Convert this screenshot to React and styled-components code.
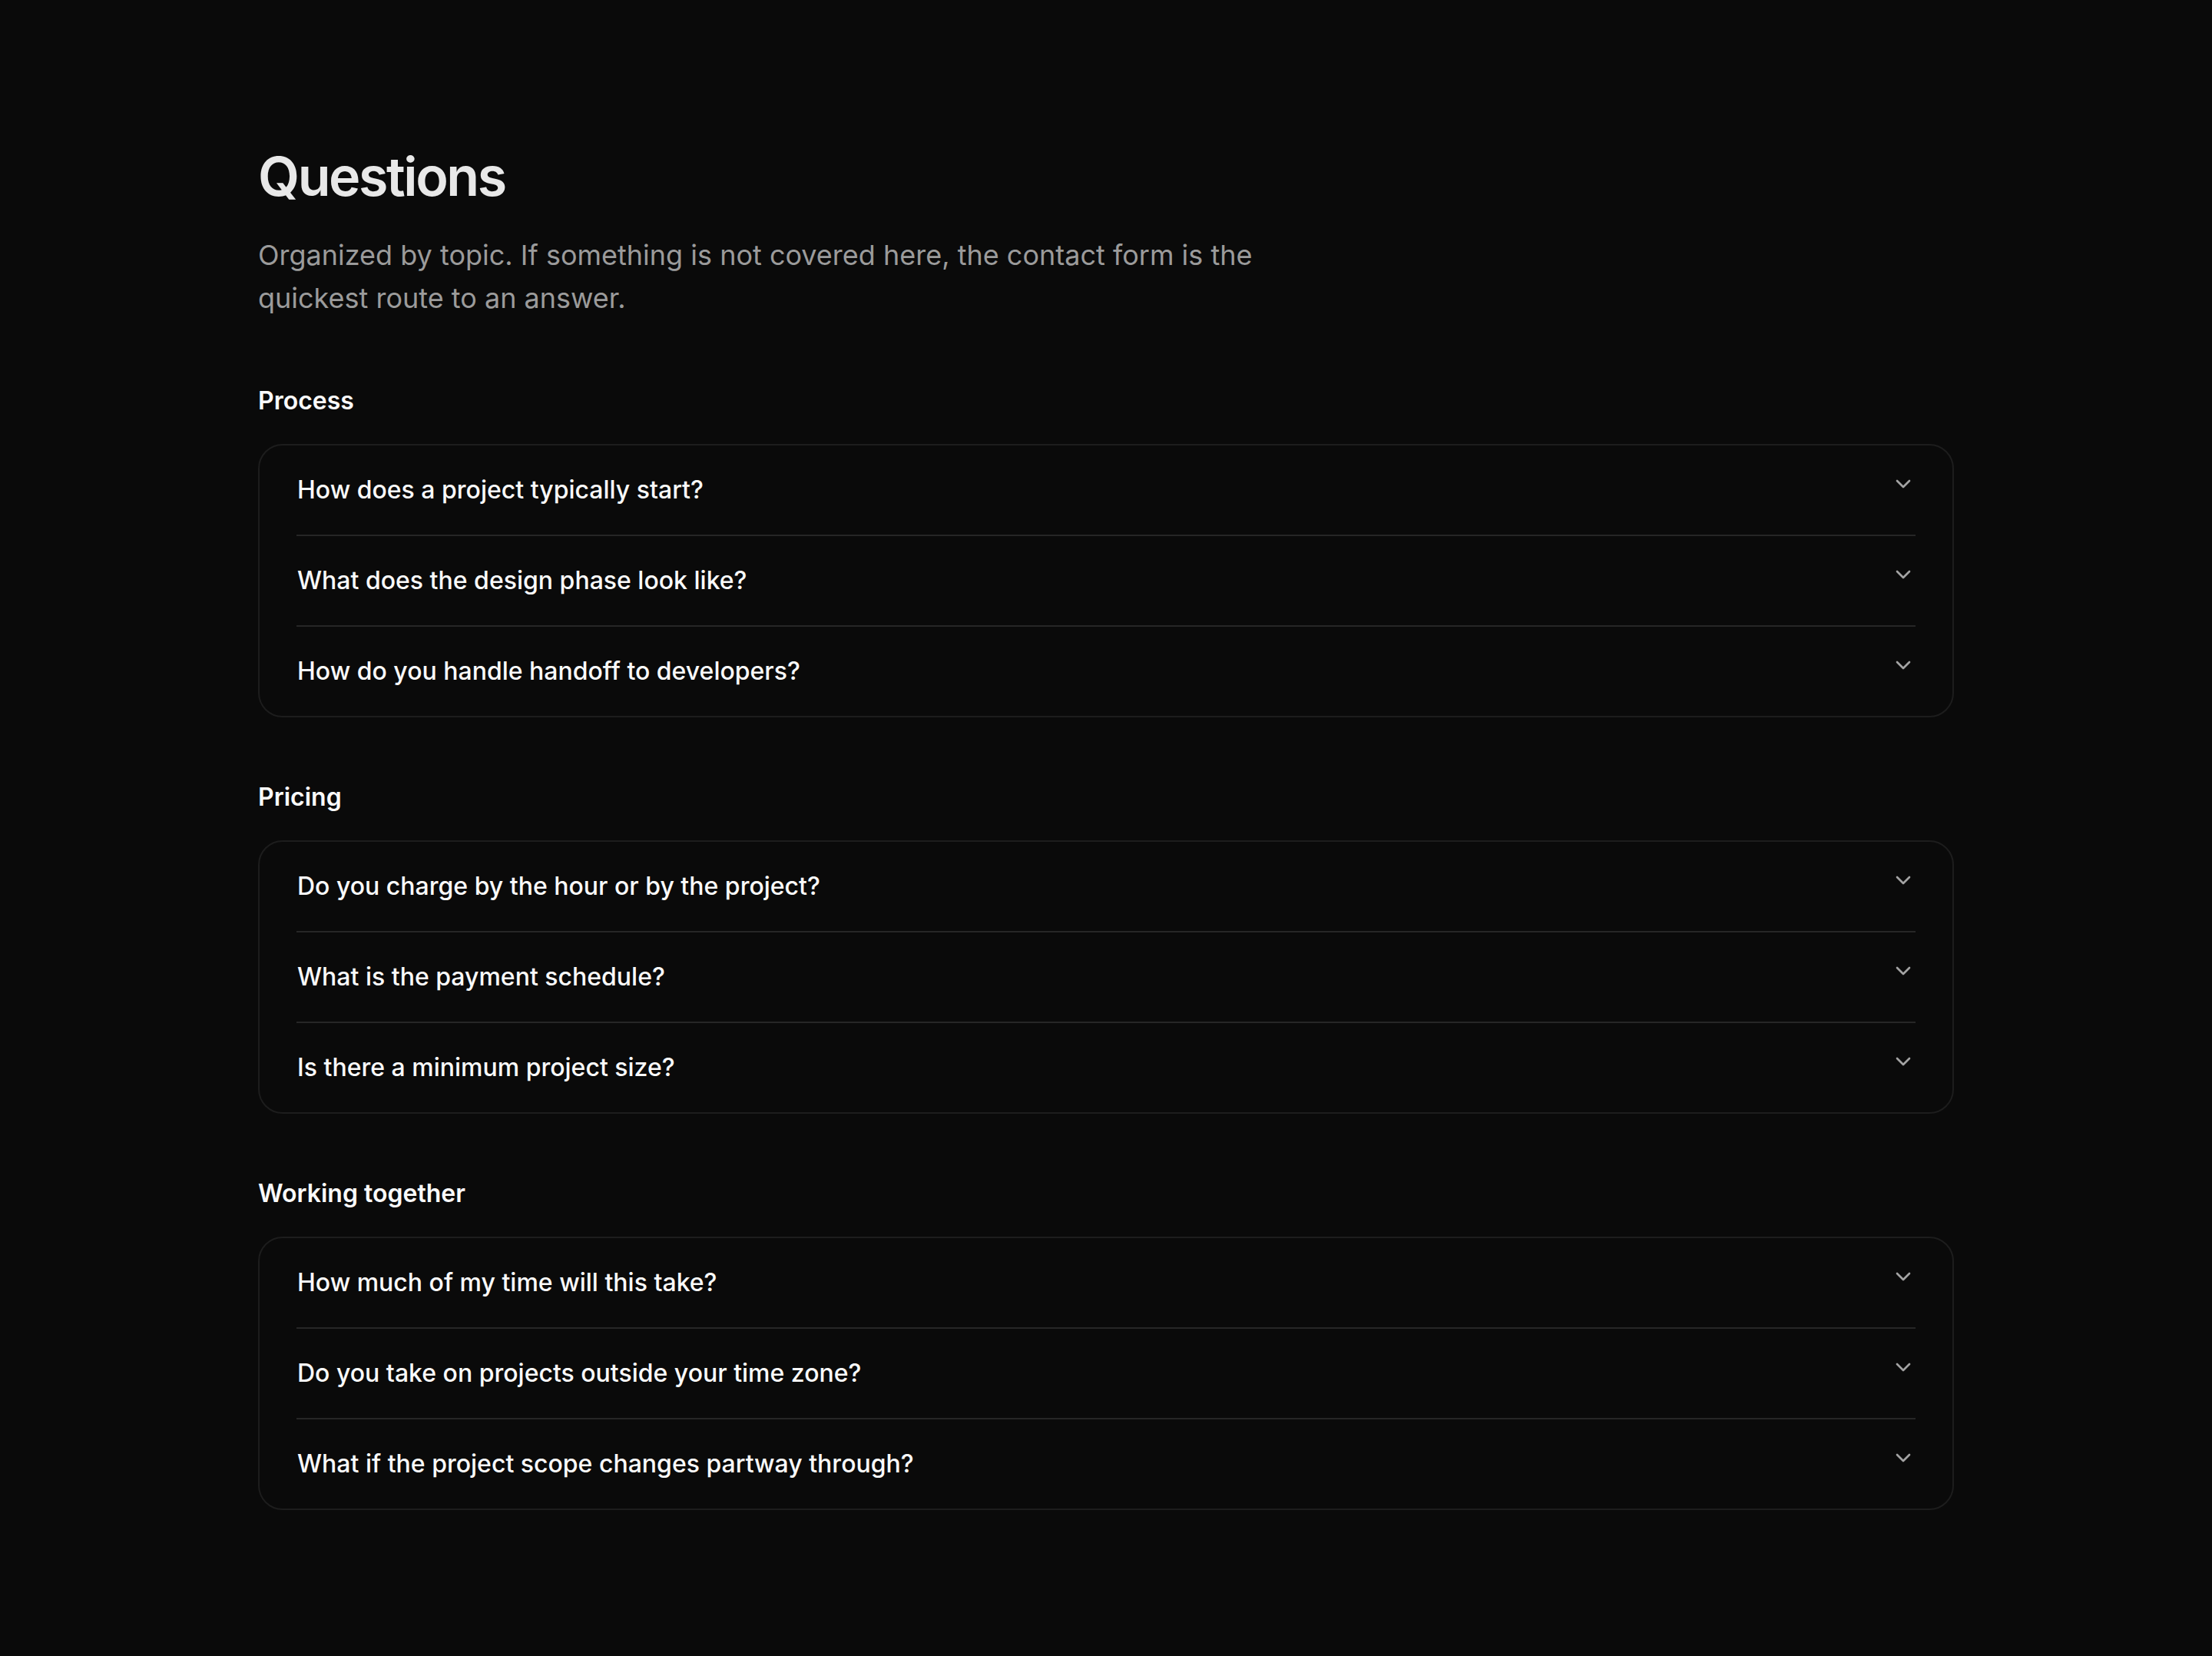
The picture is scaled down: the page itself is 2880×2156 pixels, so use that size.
import React from "react";
import styled, { createGlobalStyle } from "styled-components";
import { ChevronDown } from "lucide-react";

const GlobalStyle = createGlobalStyle`
  html, body {
    margin: 0;
    padding: 0;
    background: #0a0a0a;
  }
  body {
    font-family: Inter, "Noto Sans", "Liberation Sans", sans-serif;
    color: #fafafa;
    -webkit-font-smoothing: antialiased;
  }
  * { box-sizing: border-box; }
`;

const Page = styled.main`
  min-height: 100vh;
  background: #0a0a0a;
  padding: 187px 0 192px;
`;

const Container = styled.div`
  max-width: 2208px;
  margin: 0 auto;
  display: flex;
  flex-direction: column;
  gap: 80px;
`;

const Header = styled.header`
  display: flex;
  flex-direction: column;
  gap: 31px;
  margin-bottom: 2px;
`;

const Title = styled.h1`
  margin: 0;
  font-size: 70px;
  line-height: 86px;
  font-weight: 600;
  letter-spacing: -0.035em;
  color: #e8e8e8;
`;

const Subtitle = styled.p`
  margin: 0;
  max-width: 1344px;
  font-size: 36px;
  line-height: 56px;
  font-weight: 400;
  color: #9b9b9b;
`;

const Section = styled.section`
  display: flex;
  flex-direction: column;
  gap: 32px;
`;

const SectionLabel = styled.h2`
  margin: 0;
  font-size: 32px;
  line-height: 48px;
  font-weight: 600;
  color: #fafafa;
`;

const Card = styled.div`
  border: 2px solid #1d1d1d;
  border-radius: 32px;
  background: #0a0a0a;
`;

const Item = styled.div`
  margin: 0 48px;
  border-top: ${(p) => (p.$first ? "none" : "2px solid #262626")};
`;

const Trigger = styled.button`
  all: unset;
  box-sizing: border-box;
  width: 100%;
  display: flex;
  align-items: flex-start;
  justify-content: space-between;
  gap: 32px;
  padding: 34px 0;
  cursor: pointer;
`;

const Question = styled.span`
  font-family: Inter, "Noto Sans", "Liberation Sans", sans-serif;
  font-size: 32px;
  line-height: 48px;
  font-weight: 500;
  color: #fafafa;
  padding-left: 1px;
`;

const Icon = styled(ChevronDown)`
  flex-shrink: 0;
  color: #a3a3a3;
`;

const sections = [
  {
    label: "Process",
    items: [
      "How does a project typically start?",
      "What does the design phase look like?",
      "How do you handle handoff to developers?",
    ],
  },
  {
    label: "Pricing",
    items: [
      "Do you charge by the hour or by the project?",
      "What is the payment schedule?",
      "Is there a minimum project size?",
    ],
  },
  {
    label: "Working together",
    items: [
      "How much of my time will this take?",
      "Do you take on projects outside your time zone?",
      "What if the project scope changes partway through?",
    ],
  },
];

export default function App() {
  return (
    <>
      <GlobalStyle />
      <Page>
        <Container>
          <Header>
            <Title>Questions</Title>
            <Subtitle>
              Organized by topic. If something is not covered here, the contact
              form is the quickest route to an answer.
            </Subtitle>
          </Header>
          {sections.map((s) => (
            <Section key={s.label}>
              <SectionLabel>{s.label}</SectionLabel>
              <Card>
                {s.items.map((q, i) => (
                  <Item key={q} $first={i === 0}>
                    <Trigger type="button" aria-expanded="false">
                      <Question>{q}</Question>
                      <Icon size={32} strokeWidth={2} />
                    </Trigger>
                  </Item>
                ))}
              </Card>
            </Section>
          ))}
        </Container>
      </Page>
    </>
  );
}
